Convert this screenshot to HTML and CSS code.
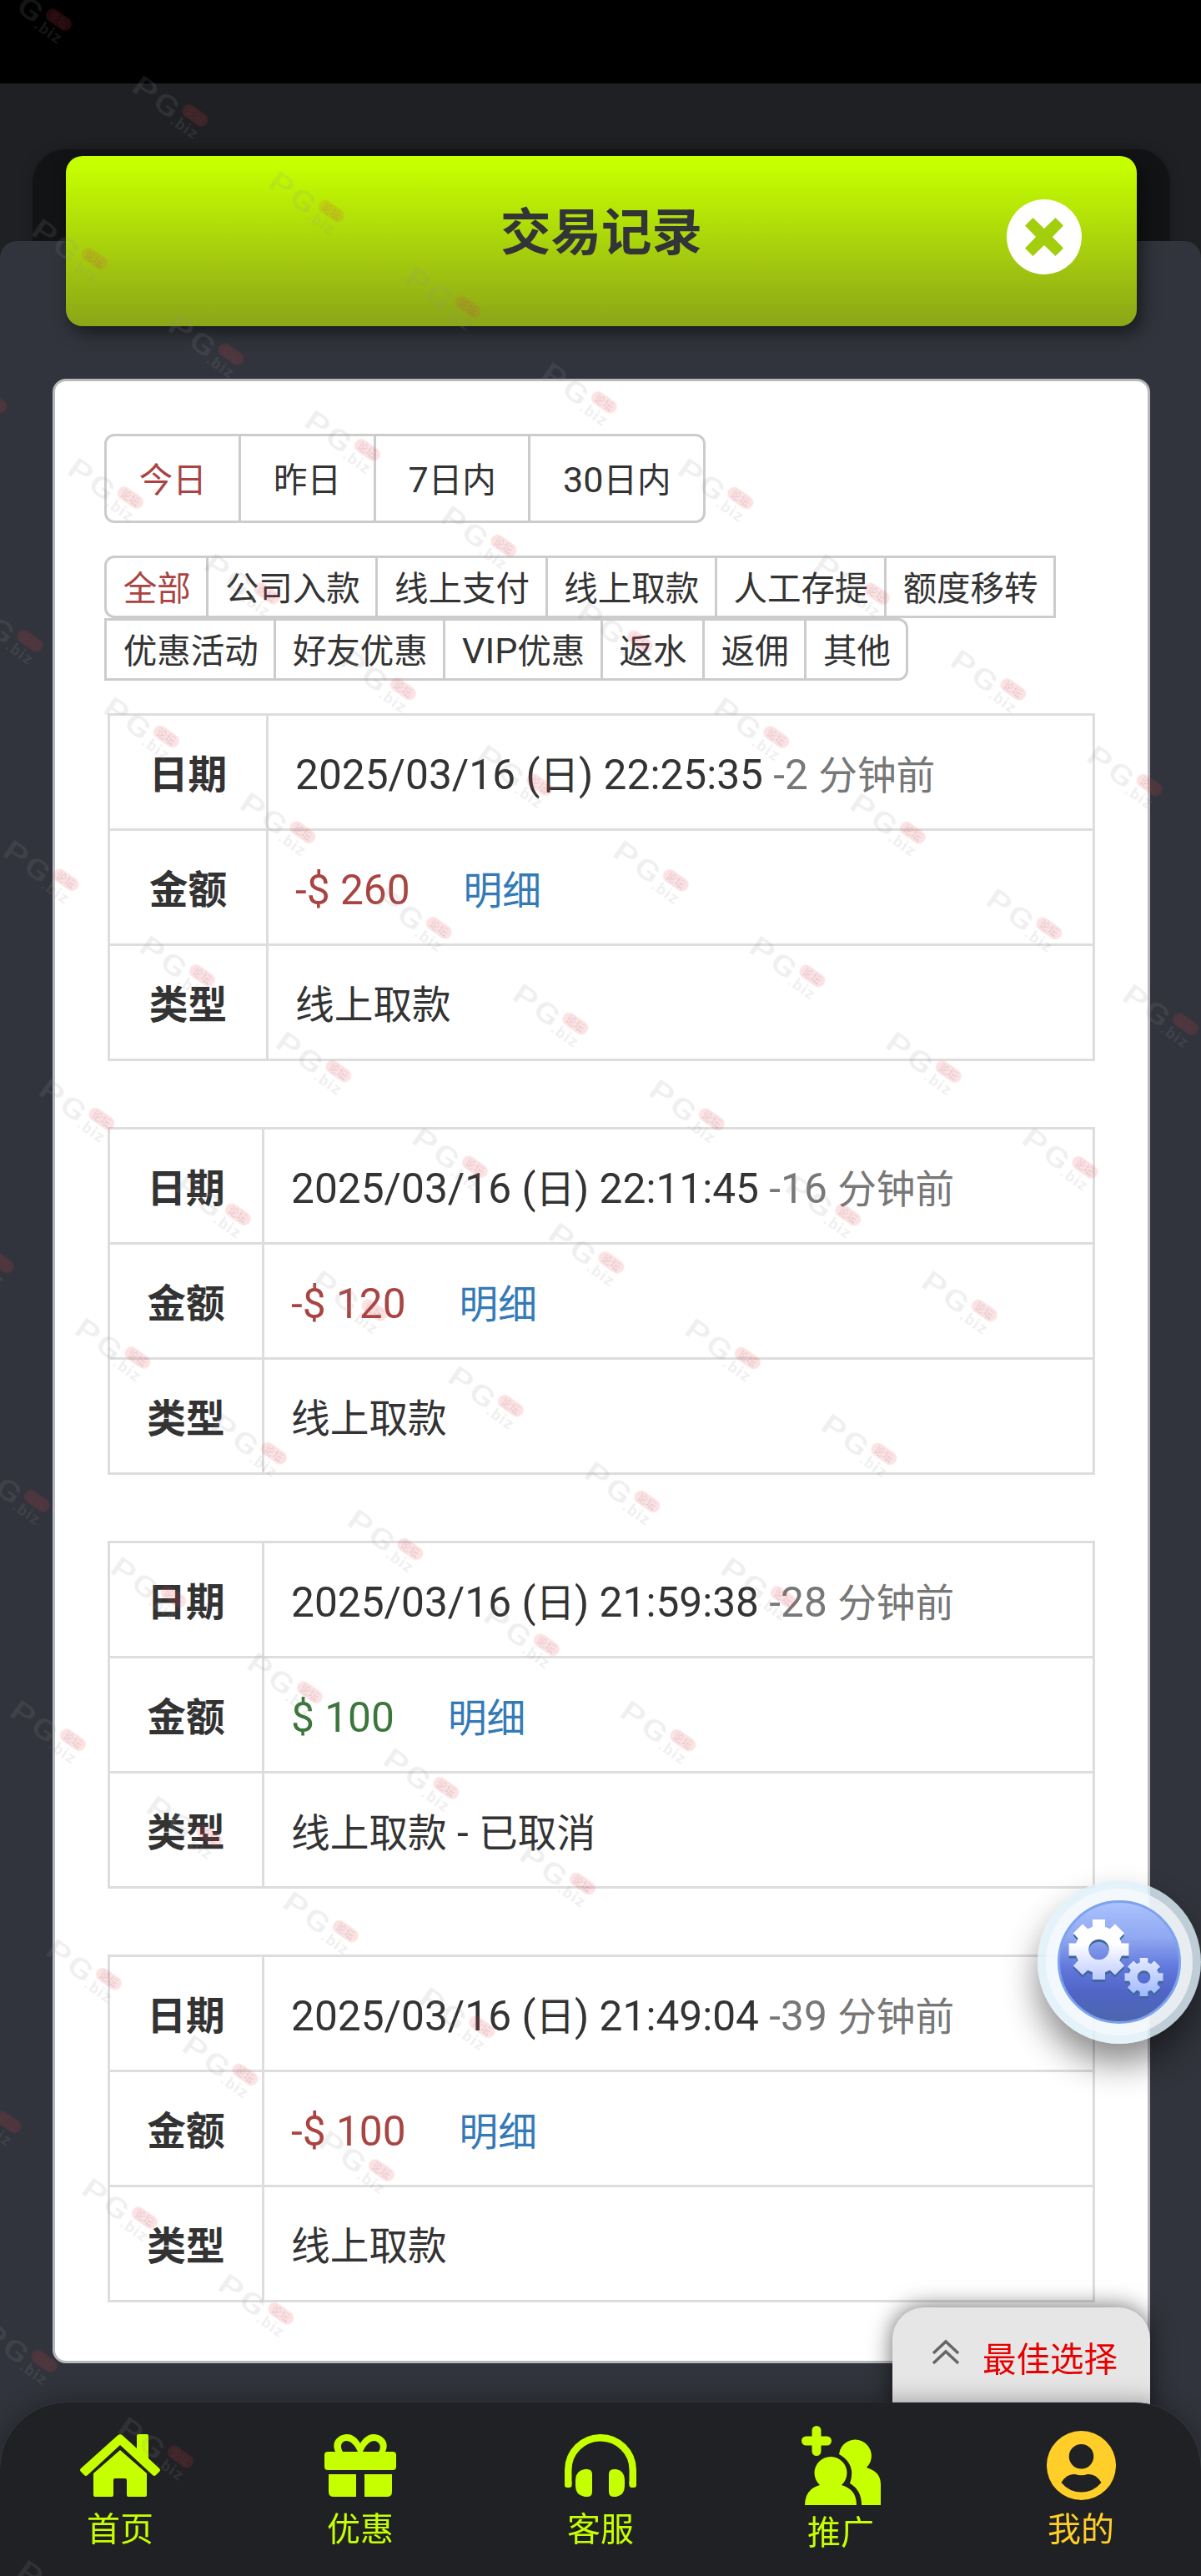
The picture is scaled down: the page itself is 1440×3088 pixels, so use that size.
FILE: index.html
```html
<!DOCTYPE html>
<html lang="zh-CN">
<head>
  <meta charset="UTF-8" />
  <title>交易记录</title>
  <link rel="stylesheet" href="styles.css">
</head>
<body>
  <div class="status-bar"></div>
  <div class="backdrop"><div class="backdrop-panel"></div></div>

  <div class="modal">
    <div class="modal-header">
      <h2>交易记录</h2>
      <svg class="close" viewBox="0 0 90 90">
        <circle cx="45" cy="45" r="45" fill="#fff"/>
        <path d="M22 31.500 31.500 22 45 35 58.500 22 68 31.500 55 45 68 58.500 58.500 68 45 55 31.500 68 22 58.500 35 45Z" fill="#a3ce0e"/>
      </svg>
    </div>

    <div class="card">
      <div class="btn-group days">
        <button class="btn active">今日</button>
        <button class="btn">昨日</button>
        <button class="btn"><span class="num">7</span>日内</button>
        <button class="btn"><span class="num">30</span>日内</button>
      </div>

      <div class="btn-group types">
        <button class="btn active">全部</button>
        <button class="btn">公司入款</button>
        <button class="btn">线上支付</button>
        <button class="btn">线上取款</button>
        <button class="btn">人工存提</button>
        <button class="btn">额度移转</button>
        <button class="btn">优惠活动</button>
        <button class="btn">好友优惠</button>
        <button class="btn"><span class="num">VIP</span>优惠</button>
        <button class="btn">返水</button>
        <button class="btn">返佣</button>
        <button class="btn">其他</button>
      </div>

      <table class="record first">
        <tr><th>日期</th><td><span class="num">2025/03/16 (<small>日</small>) 22:25:35 </span><span class="ago"><span class="num">-2 </span>分钟前</span></td></tr>
        <tr><th>金额</th><td><span class="num out">-$ 260</span><a class="detail">明细</a></td></tr>
        <tr><th>类型</th><td>线上取款</td></tr>
      </table>
      <table class="record">
        <tr><th>日期</th><td><span class="num">2025/03/16 (<small>日</small>) 22:11:45 </span><span class="ago"><span class="num">-16 </span>分钟前</span></td></tr>
        <tr><th>金额</th><td><span class="num out">-$ 120</span><a class="detail">明细</a></td></tr>
        <tr><th>类型</th><td>线上取款</td></tr>
      </table>
      <table class="record">
        <tr><th>日期</th><td><span class="num">2025/03/16 (<small>日</small>) 21:59:38 </span><span class="ago"><span class="num">-28 </span>分钟前</span></td></tr>
        <tr><th>金额</th><td><span class="num in">$ 100</span><a class="detail">明细</a></td></tr>
        <tr><th>类型</th><td>线上取款<span class="num"> - </span>已取消</td></tr>
      </table>
      <table class="record">
        <tr><th>日期</th><td><span class="num">2025/03/16 (<small>日</small>) 21:49:04 </span><span class="ago"><span class="num">-39 </span>分钟前</span></td></tr>
        <tr><th>金额</th><td><span class="num out">-$ 100</span><a class="detail">明细</a></td></tr>
        <tr><th>类型</th><td>线上取款</td></tr>
      </table>
    </div>
  </div>

  <!-- floating settings button -->
  <div class="float-btn">
    <div class="float-ring">
      <svg class="gears" viewBox="0 0 150 150">
        <defs>
          <linearGradient id="ball" x1="0" y1="0" x2="0" y2="1">
            <stop offset="0" stop-color="#acc3ff"/>
            <stop offset=".3" stop-color="#8fa8f0"/>
            <stop offset=".55" stop-color="#6077dc"/>
            <stop offset=".75" stop-color="#5065c6"/>
            <stop offset="1" stop-color="#4c66ac"/>
          </linearGradient>
          <linearGradient id="gearFill" x1="0" y1="-100" x2="0" y2="100" gradientUnits="userSpaceOnUse">
            <stop offset=".4" stop-color="#fff"/>
            <stop offset="1" stop-color="#bccaff"/>
          </linearGradient>
          <linearGradient id="gearFill2" x1="0" y1="-100" x2="0" y2="100" gradientUnits="userSpaceOnUse">
            <stop offset="0" stop-color="#e4eaff"/>
            <stop offset="1" stop-color="#9fb8ff"/>
          </linearGradient>
          <path id="gear" fill-rule="evenodd" d="M-21-100H21V-76L37-69 54-85 85-54 69-37 76-21H100V21H76L69 37 85 54 54 85 37 69 21 76V100H-21V76L-37 69-54 85-85 54-69 37-76 21H-100V-21H-76L-69-37-85-54-54-85-37-69-21-76ZM0-34A34 34 0 1 0 0 34 34 34 0 1 0 0-34Z"/>
        </defs>
        <circle cx="75" cy="75" r="72.500" fill="url(#ball)" stroke="#7da2ee" stroke-width="3"/>
        <g transform="translate(50.500 60) scale(.36)">
          <use href="#gear" y="8" fill="#3e6896"/>
          <use href="#gear" fill="url(#gearFill)"/>
        </g>
        <g transform="translate(104.500 93) scale(.23)">
          <use href="#gear" y="12" fill="#3e6896"/>
          <use href="#gear" fill="url(#gearFill2)"/>
        </g>
      </svg>
    </div>
  </div>

  <!-- best choice tab -->
  <div class="best">
    <svg width="34" height="32" viewBox="0 0 34 32" fill="none" stroke="#666" stroke-width="3.500">
      <path d="M2 17 17 3 32 17M2 29 17 15 32 29"/>
    </svg>
    <span>最佳选择</span>
  </div>

  <div class="tabbar">
    <a class="tab">
      <svg width="96" height="75" viewBox="0 0 96 75">
        <path d="M45 1.500Q48 -1 51 1.500L68 17V2Q68 0 70 0H80Q82 0 82 2V29L95 41Q97 43 95 45L91 49Q89 51 87 49L48 13 9 49Q7 51 5 49L1 45Q-1 43 1 41Z"/>
        <path d="M48 19 80 47V73Q80 75 78 75H58Q56 75 56 73V55Q56 53 54 53H42Q40 53 40 55V73Q40 75 38 75H18Q16 75 16 73V47Z"/>
      </svg>
      首页
    </a>
    <a class="tab">
      <svg width="86" height="75" viewBox="0 0 86 75">
        <path d="M4 21H13C7 8 18 0 27 0 35 0 40 6 43 11 46 6 51 0 59 0 68 0 79 8 73 21H82Q86 21 86 25V39Q86 43 82 43H4Q0 43 0 39V25Q0 21 4 21ZM22 21H40C37 14 32 8 26 8 20 9 18 15 22 21ZM46 21H65C69 15 66 9 60 8 54 8 49 14 46 21Z" fill-rule="evenodd"/>
        <path d="M5 48H38V75H11Q5 75 5 69ZM48 48H81V69Q81 75 75 75H48Z"/>
      </svg>
      优惠
    </a>
    <a class="tab">
      <svg width="86" height="75" viewBox="0 0 86 75">
        <path d="M4.250 60V43A38.750 38.750 0 0 1 81.750 43V60" fill="none" stroke="#c6ff00" stroke-width="8.500" stroke-linecap="butt"/>
        <rect x="0" y="55" width="8.500" height="9" rx="3"/><rect x="77.500" y="55" width="8.500" height="9" rx="3"/>
        <path d="M24 42H27Q33 42 33 48V69Q33 75 27 75H24Q13 73 13 62V55Q13 44 24 42ZM62 42H59Q53 42 53 48V69Q53 75 59 75H62Q72 73 72 62V55Q72 44 62 42Z"/>
      </svg>
      客服
    </a>
    <a class="tab promo">
      <svg width="95" height="95" viewBox="0 0 95 95">
        <path d="M18 5.500V30.500M5.500 18H30.500" stroke="#c6ff00" stroke-width="11" stroke-linecap="round"/>
        <path d="M45 34A19.500 19.500 0 1 1 78 50Q95 55 95 70V95H72Q72 77 58 69 66 46 45 34Z"/>
        <path d="M22 71A19.500 19.500 0 1 1 48 71Q66 76 66 95H4Q4 76 22 71Z"/>
      </svg>
      推广
    </a>
    <a class="tab mine">
      <svg width="83" height="83" viewBox="0 0 83 83">
        <path fill-rule="evenodd" d="M41.500 0A41.500 41.500 0 1 0 41.500 83 41.500 41.500 0 1 0 41.500 0ZM41.500 16A14.500 14.500 0 1 1 41.500 45.500 14.500 14.500 0 1 1 41.500 16ZM17.500 62Q24 51 34 52 41.500 54.500 49 52 59 51 65.500 62 56 73.500 41.500 73.500 27 73.500 17.500 62Z"/>
      </svg>
      我的
    </a>
  </div>

  <svg class="watermark" width="1440" height="3088">
    <defs>
      <pattern id="mark" x="-5" y="-5" width="199.700" height="209.800" patternUnits="userSpaceOnUse">
        <g transform="translate(5 5)" fill="#949494" fill-opacity=".15">
          <text transform="translate(-2 24) scale(1.300 1)" font-size="34" font-weight="500">P</text>
          <text transform="translate(29 25) scale(1.300 1)" font-size="34" font-weight="500">G</text>
          <text x="59" y="29" font-size="19" font-weight="bold" textLength="35">.biz</text>
          <rect x="62" y="-4" width="34" height="16" rx="8" fill="#f03c4b"/>
          <text x="67" y="9" font-size="12" fill="#555" fill-opacity=".18">论坛</text>
        </g>
      </pattern>
    </defs>
    <rect x="-5" y="-5" width="1997" height="3147" fill="url(#mark)" transform="translate(8 -25) rotate(35.050)"/>
  </svg>
</body>
</html>
```
FILE: styles.css
```css
* { box-sizing: border-box; }
body {
  margin: 0;
  height: 3088px;
  background: #000;
  color: #333;
  font-family: Roboto, "Noto Sans CJK SC", sans-serif;
  overflow: hidden;
}
.status-bar { height: 100px; }
.backdrop {
  height: 230px;
  padding: 79px 37px 0 39px;
  background: #1e2023;
}
.backdrop-panel {
  height: 151px;
  background: #121315;
  border-radius: 40px 40px 0 0;
  box-shadow: 0 0 16px rgba(0, 0, 0, 0.2);
}

/* modal */
.modal {
  position: relative;
  height: 2799px;
  margin-top: -41px;
  padding: 0 61px 0 63px;
  background: #31343c;
  border-radius: 20px 20px 0 0;
}
.modal-header {
  position: relative;
  top: -102px;
  display: grid;
  grid-template-columns: 1fr auto 1fr;
  align-items: center;
  height: 204px;
  margin: 0 16px -39px;
  padding: 0 66px 11px;
  background: linear-gradient(#c6ff00 5%, #8ba518);
  border-radius: 20px;
  box-shadow: 6px 8px 20px rgba(0, 0, 0, 0.5);
}
.modal-header h2 {
  grid-column: 2;
  margin: 0 0 7px;
  font-size: 60.5px;
  line-height: 80px;
  color: #333438;
}
.close { width: 90px; height: 90px; justify-self: end; }
.card {
  height: 2379px;
  padding: 63px 64px 0 59px;
  background: #fff;
  border: 3px solid #b9b9bb;
  border-radius: 16px;
}

/* latin and digits sit a bit larger than the chinese text */
.num { font-size: 1.063em; }
.num small { font-size: 0.94em; }

/* filter buttons */
.btn-group {
  display: flex;
  flex-wrap: wrap;
  padding-left: 3px;
}
.btn {
  margin: 0 0 0 -3px;
  background: #fff;
  border: 3px solid #ccc;
  color: #333;
  font-family: inherit;
  font-size: 40.5px;
  line-height: 60px;
}
.btn.active { color: #a94442; }
.btn:first-child { border-radius: 12px 0 0 12px; }
.btn:last-child { border-radius: 0 12px 12px 0; }
.days .btn { height: 107px; padding: 4px 38.7px 0; }
.types { margin-top: 39px; }
.types .btn { height: 75px; padding: 4px 18.5px 0 19.7px; line-height: 62px; }

/* records */
.record {
  width: 1184px;
  margin: 0 0 79px 4px;
  border-collapse: collapse;
  table-layout: fixed;
  font-size: 46.7px;
  line-height: 66px;
}
.record.first { margin-top: 39px; }
.record tr { height: 138px; }
.record th, .record td {
  padding: 7px 0 0;
  border: 3px solid #ddd;
}
.record th { width: 185px; }
.record.first th { width: 190px; }
.record td { padding-left: 32px; text-align: left; }
.ago { color: #777; }
.out { color: #a94442; }
.in { color: #3c763d; }
.detail { margin-left: 64px; color: #337ab7; }

/* floating settings button */
.float-btn {
  position: fixed;
  left: 1244px;
  top: 2254px;
  width: 196px;
  height: 196px;
  padding: 10px;
  border-radius: 50%;
  background: rgba(222, 239, 248, 0.82);
  box-shadow: 0 24px 40px rgba(0, 0, 0, 0.45);
}
.float-ring {
  width: 176px;
  height: 176px;
  padding: 13px;
  border-radius: 50%;
  background: rgba(250, 251, 252, 0.7);
}
.gears { display: block; width: 150px; height: 150px; }

/* best choice tab */
.best {
  position: fixed;
  left: 1070px;
  top: 2766px;
  display: flex;
  align-items: center;
  gap: 27px;
  width: 309px;
  height: 130px;
  padding: 0 0 20px 47px;
  background: #e6e6e6;
  border-radius: 38px 38px 0 0;
  box-shadow: 0 0 28px rgba(0, 0, 0, 0.6);
  color: #e60000;
  font-size: 40.5px;
}
.best svg { margin-bottom: 2px; }
.best span { padding-top: 9px; }

/* bottom tab bar */
.tabbar {
  position: fixed;
  left: 0;
  bottom: 0;
  display: flex;
  width: 1440px;
  height: 208px;
  background: #202124;
  border-radius: 80px 80px 0 0;
  box-shadow: 0 0 30px rgba(0, 0, 0, 0.35), 0 0 1px #777;
}
.tab {
  display: flex;
  flex: 1;
  flex-direction: column;
  align-items: center;
  gap: 11px;
  padding-top: 38px;
  color: #c6ff00;
  fill: #c6ff00;
  font-size: 40px;
  line-height: 58px;
}
.tab.promo { padding-top: 28px; gap: 5px; }
.tab.mine { padding-top: 34px; gap: 7px; color: #ffce28; fill: #ffce28; }

.watermark {
  position: fixed;
  left: 0;
  top: 0;
  pointer-events: none;
  font-family: Roboto, "Noto Sans CJK SC", sans-serif;
}
```
